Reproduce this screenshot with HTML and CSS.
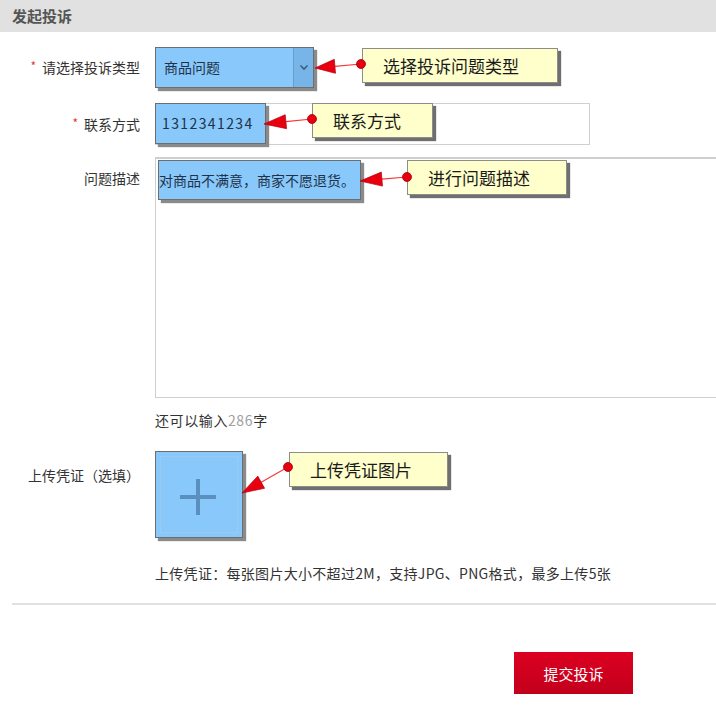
FILE: index.html
```html
<!DOCTYPE html>
<html lang="zh-CN">
<head>
<meta charset="utf-8">
<title>发起投诉</title>
<link rel="stylesheet" href="styles.css">
</head>
<body>
<div class="page">
  <div class="header">发起投诉</div>

  <div class="form">
    <div class="row row-select">
      <label class="label"><span class="star">*</span>请选择投诉类型</label>
      <div class="field">
        <div class="select">
          <span class="select-text">商品问题</span>
          <span class="select-arrow">
            <svg width="10" height="7" viewBox="0 0 10 7"><path d="M1.5 1.5 L5 5 L8.5 1.5" fill="none" stroke="#3a5f80" stroke-width="1.6"/></svg>
          </span>
        </div>
      </div>
    </div>

    <div class="row row-input">
      <label class="label"><span class="star">*</span>联系方式</label>
      <div class="field">
        <div class="input">
          <div class="hl hl-input">1312341234</div>
        </div>
      </div>
    </div>

    <div class="row row-text">
      <label class="label label-top">问题描述</label>
      <div class="field">
        <div class="textarea">
          <div class="hl hl-text">对商品不满意，商家不愿退货。</div>
        </div>
        <div class="counter">还可以输入<span class="num">286</span>字</div>
      </div>
    </div>

    <div class="row row-upload">
      <label class="label label-top2">上传凭证（选填）</label>
      <div class="field">
        <div class="upload">
          <div class="upload-inner">
            <span class="plus-h"></span>
            <span class="plus-v"></span>
          </div>
        </div>
        <div class="hint">上传凭证：每张图片大小不超过2M，支持JPG、PNG格式，最多上传5张</div>
      </div>
    </div>
  </div>

  <div class="divider"></div>

  <div class="actions">
    <button class="submit">提交投诉</button>
  </div>

  <div class="callout c1">选择投诉问题类型</div>
  <div class="callout c2">联系方式</div>
  <div class="callout c3">进行问题描述</div>
  <div class="callout c4">上传凭证图片</div>

  <svg class="arrows" width="716" height="723" viewBox="0 0 716 723">
    <g stroke="#f23a3a" stroke-width="1.2" fill="none">
      <line x1="334.9" y1="66.3" x2="361" y2="64"/>
      <line x1="285.9" y1="121.7" x2="312" y2="119"/>
      <line x1="381.9" y1="179.1" x2="407" y2="177"/>
      <line x1="261.2" y1="482.2" x2="288" y2="467"/>
    </g>
    <g fill="#e8000f" stroke="#b00010" stroke-width="0.7">
      <polygon points="315,68 335.5,73.3 334.3,59.3"/>
      <polygon points="264,124 286.6,128.7 285.2,114.7"/>
      <polygon points="360,181 382.5,186.1 381.3,172.1"/>
      <polygon points="242,493 264.6,488.3 257.8,476.1"/>
    </g>
    <g fill="#e8000f" stroke="#a0000c" stroke-width="0.8">
      <circle cx="361" cy="64" r="4.5"/>
      <circle cx="312" cy="119" r="4.5"/>
      <circle cx="407" cy="177" r="4.5"/>
      <circle cx="288" cy="467" r="4.5"/>
    </g>
  </svg>
</div>
</body>
</html>
```

FILE: styles.css
```css
* { box-sizing: border-box; }
html, body { margin: 0; padding: 0; background: #fff; }
body {
  font-family: "Noto Sans CJK SC", "Noto Sans", "Liberation Sans", sans-serif;
  font-size: 14px;
  color: #333;
  overflow: hidden;
}
.page {
  position: relative;
  width: 716px;
  height: 723px;
  overflow: hidden;
}
.header {
  height: 32px;
  background: #e1e1e1;
  padding-left: 12px;
  font-size: 15px;
  font-weight: bold;
  color: #555;
  line-height: 32px;
}
.form { padding-top: 15px; }
.row {
  display: grid;
  grid-template-columns: 140px 1fr;
  column-gap: 15px;
}
.label {
  text-align: right;
  color: #333;
  font-size: 14px;
  line-height: 20px;
  white-space: nowrap;
}
.row-select .label, .row-input .label { align-self: center; }
.label-top { padding-top: 11px; }
.label-top2 { padding-top: 14px; }
.star {
  color: #e4393c;
  font-size: 12px;
  margin-right: 6px;
  position: relative;
  top: -2px;
}
.field { min-width: 0; }

.select {
  width: 159px;
  height: 41px;
  background: #88c8fb;
  border: 1px solid #6d6d6d;
  box-shadow: 3px 3px 1px #8a8a8a;
  display: flex;
  align-items: stretch;
}
.select-text {
  flex: 1;
  padding-left: 8px;
  line-height: 39px;
  color: #1f3247;
  font-size: 14px;
}
.select-arrow {
  width: 20px;
  background: #77b5e8;
  border-left: 1px solid #6a9cc8;
  display: flex;
  align-items: center;
  justify-content: center;
}

.row-input { margin-top: 15px; }
.input {
  position: relative;
  width: 435px;
  height: 42px;
  border: 1px solid #cfcfcf;
  background: #fff;
}
.hl {
  position: absolute;
  background: #88c8fb;
  border: 1px solid #6d6d6d;
  box-shadow: 3px 3px 1px #8a8a8a;
  color: #1f3247;
  white-space: nowrap;
}
.hl-input {
  left: -1px;
  top: -1px;
  width: 111px;
  height: 41px;
  padding-left: 6px;
  line-height: 39px;
  font-size: 14px;
  letter-spacing: 1.4px;
}

.row-text { margin-top: 12px; }
.textarea {
  position: relative;
  width: 580px;
  height: 241px;
  border: 1px solid #cfcfcf;
  border-top: 2px solid #cfcfcf;
  background: #fff;
}
.hl-text {
  left: 2px;
  top: 1px;
  width: 203px;
  height: 40px;
  line-height: 38px;
  font-size: 14px;
  padding-left: 0;
}
.counter {
  margin-top: 12px;
  line-height: 20px;
  font-size: 14px;
  color: #333;
  letter-spacing: 0.6px;
}
.num { color: #a0a0a0; }

.row-upload { margin-top: 21px; }
.upload {
  width: 88px;
  height: 87px;
  background: #88c8fb;
  border: 1px solid #6d6d6d;
  box-shadow: 3px 3px 1px #8a8a8a;
  padding: 4px;
}
.upload-inner {
  position: relative;
  width: 100%;
  height: 100%;
  border: 1px dotted #a9cde9;
}
.plus-h, .plus-v {
  position: absolute;
  background: #5b8fbf;
}
.plus-h { width: 36px; height: 4px; left: 19px; top: 38px; }
.plus-v { width: 4px; height: 36px; left: 35px; top: 22px; }

.hint {
  margin-top: 25px;
  line-height: 20px;
  font-size: 14px;
  color: #333;
  white-space: nowrap;
  letter-spacing: 0.3px;
}

.divider {
  margin: 20px 0 0 12px;
  height: 2px;
  background: #e0e0e0;
}
.actions {
  padding-left: 514px;
  margin-top: 47px;
}
.submit {
  width: 119px;
  height: 42px;
  border: none;
  background: linear-gradient(#dc0020, #c2001c);
  color: #fff;
  font-family: "Noto Sans CJK SC", "Noto Sans", sans-serif;
  font-size: 15px;
  padding: 0;
  cursor: pointer;
}

.arrows {
  position: absolute;
  left: 0;
  top: 0;
  pointer-events: none;
}
.callout {
  position: absolute;
  height: 35px;
  background: #ffffcb;
  border: 1px solid #8c8c8c;
  box-shadow: 3px 3px 1px #6f6f6f;
  font-size: 17px;
  line-height: 33px;
  color: #1a1a1a;
  padding-left: 20px;
  white-space: nowrap;
}
.c1 { left: 362px; top: 48px; width: 196px; }
.c2 { left: 312px; top: 103px; width: 121px; }
.c3 { left: 407px; top: 160px; width: 160px; }
.c4 { left: 289px; top: 452px; width: 159px; }
```
